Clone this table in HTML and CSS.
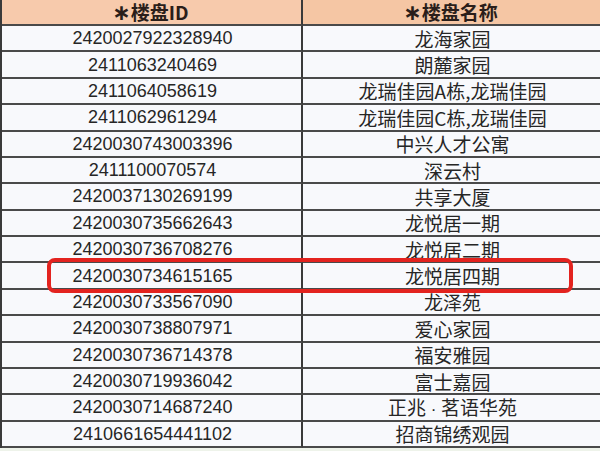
FILE: index.html
```html
<!DOCTYPE html>
<html lang="zh">
<head>
<meta charset="utf-8">
<link rel="stylesheet" href="styles.css">
</head>
<body>
<div class="sheet">
  <div class="table">
    <div class="cell head left"><span class="label"><span class="star">∗</span>楼盘ID</span></div>
    <div class="cell head right"><span class="label"><span class="star">∗</span>楼盘名称</span></div>

    <div class="cell id">2420027922328940</div><div class="cell name">龙海家园</div>
    <div class="cell id">2411063240469</div><div class="cell name">朗麓家园</div>
    <div class="cell id">2411064058619</div><div class="cell name">龙瑞佳园A栋,龙瑞佳园</div>
    <div class="cell id">2411062961294</div><div class="cell name">龙瑞佳园C栋,龙瑞佳园</div>
    <div class="cell id">2420030743003396</div><div class="cell name">中兴人才公寓</div>
    <div class="cell id">2411100070574</div><div class="cell name">深云村</div>
    <div class="cell id">2420037130269199</div><div class="cell name">共享大厦</div>
    <div class="cell id">2420030735662643</div><div class="cell name">龙悦居一期</div>
    <div class="cell id">2420030736708276</div><div class="cell name">龙悦居二期</div>
    <div class="cell id">2420030734615165</div><div class="cell name">龙悦居四期</div>
    <div class="cell id">2420030733567090</div><div class="cell name">龙泽苑</div>
    <div class="cell id">2420030738807971</div><div class="cell name">爱心家园</div>
    <div class="cell id">2420030736714378</div><div class="cell name">福安雅园</div>
    <div class="cell id">2420030719936042</div><div class="cell name">富士嘉园</div>
    <div class="cell id">2420030714687240</div><div class="cell name"><span>正兆<span class="dot"> · </span>茗语华苑</span></div>
    <div class="cell id">2410661654441102</div><div class="cell name">招商锦绣观园</div>
  </div>
  <div class="highlight"></div>
</div>
</body>
</html>
```

FILE: styles.css
```css
html, body {
  margin: 0;
  padding: 0;
}
body {
  width: 600px;
  height: 451px;
  overflow: hidden;
  background: #eef3ea;
  font-family: "Liberation Sans", "Noto Sans CJK SC", sans-serif;
  color: #262626;
}
.sheet {
  position: relative;
  width: 600px;
  height: 451px;
}
.table {
  display: grid;
  grid-template-columns: 301px 299px;
  grid-template-rows: 26px repeat(16, 26.375px);
  border-left: 2px solid #3a3a3a;
}
.cell {
  box-sizing: border-box;
  display: flex;
  align-items: center;
  justify-content: center;
  border-bottom: 2px solid #4a4a4a;
  background: #f8f9fc;
  white-space: nowrap;
}
.cell:nth-child(odd) {
  border-right: 2px solid #3a3a3a;
  padding-left: 2px;
}
.head {
  background: #f6c9aa;
  font-weight: bold;
  font-size: 19px;
  color: #2a1e1a;
  font-family: "Noto Sans CJK SC", "Liberation Sans", sans-serif;
  line-height: 20px;
}
.head.left {
  background: #f7caac;
}
.head.right {
  background: #f5c6a4;
}
.label {
  display: block;
}
.star {
  font-family: "DejaVu Sans", sans-serif;
  font-weight: bold;
  font-size: 22px;
  line-height: 20px;
  margin-left: -4px;
  margin-right: 0;
}
.id {
  font-size: 18px;
  padding-top: 1px;
}
.name {
  font-size: 19px;
  font-family: "Noto Sans CJK SC", "Liberation Sans", sans-serif;
  line-height: 1;
}
.dot {
  font-family: "Liberation Sans", sans-serif;
  font-size: 17px;
  white-space: pre;
}
.highlight {
  position: absolute;
  left: 47px;
  top: 258px;
  width: 526px;
  height: 35px;
  box-sizing: border-box;
  border: 4px solid #e3231f;
  border-radius: 8px;
}
```
